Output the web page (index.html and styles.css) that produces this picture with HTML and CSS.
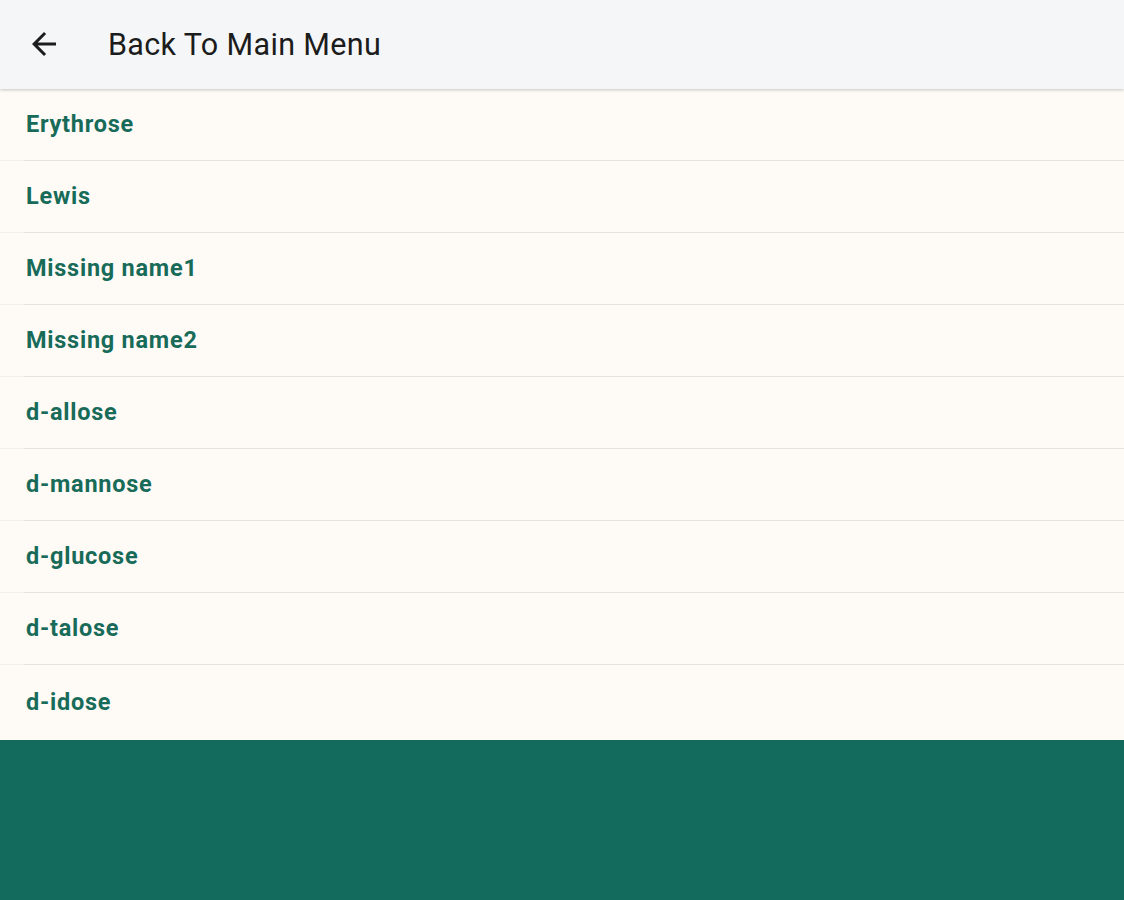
FILE: index.html
```html
<!DOCTYPE html>
<html>
<head>
<meta charset="utf-8">
<link rel="stylesheet" href="styles.css">
</head>
<body>
<div class="app">
  <header class="topbar">
    <svg class="back" viewBox="0 0 24 24" width="36" height="36"><path d="M20 11H7.83l5.59-5.59L12 4l-8 8 8 8 1.41-1.41L7.83 13H20v-2z" fill="#1c1c1c"/></svg>
    <span class="title">Back To Main Menu</span>
  </header>
  <ul class="list">
    <li class="item">Erythrose</li>
    <li class="item">Lewis</li>
    <li class="item">Missing name1</li>
    <li class="item">Missing name2</li>
    <li class="item">d-allose</li>
    <li class="item">d-mannose</li>
    <li class="item">d-glucose</li>
    <li class="item">d-talose</li>
    <li class="item last">d-idose</li>
  </ul>
  <footer class="footer"></footer>
</div>
</body>
</html>
```
FILE: styles.css
```css
html, body {
  margin: 0;
  padding: 0;
  height: 100%;
}
body {
  font-family: Roboto, "Noto Sans", sans-serif;
  background: #fefbf7;
}
.app {
  display: flex;
  flex-direction: column;
  height: 900px;
}
.topbar {
  height: 89px;
  flex: none;
  background: #f5f6f8;
  display: flex;
  align-items: center;
  box-shadow: 0 1px 3px rgba(0,0,0,0.22);
  position: relative;
  z-index: 1;
}
.back {
  margin-left: 26px;
  margin-top: -2px;
}
.title {
  margin-left: 46px;
  font-size: 30.5px;
  color: #1c1c1c;
  letter-spacing: 0.35px;
}
.list {
  list-style: none;
  margin: 0;
  padding: 0;
  background: #fefbf7;
}
.item {
  box-sizing: border-box;
  height: 72px;
  display: flex;
  align-items: center;
  padding-left: 26px;
  padding-bottom: 3px;
  font-size: 23.5px;
  font-weight: 700;
  letter-spacing: 0.75px;
  color: #186b59;
  background: linear-gradient(to right, #f2f0ec 24px, #e5e3df 24px) left bottom / 100% 1px no-repeat;
}
.item.last {
  height: 75px;
  padding-bottom: 2px;
  background: none;
}
.footer {
  flex: 1;
  background: #136b5e;
}
```
